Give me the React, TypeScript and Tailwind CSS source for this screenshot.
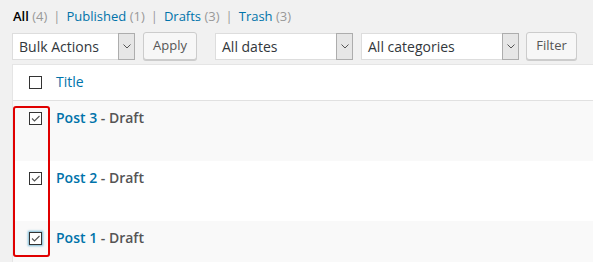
import React from 'react';

const Chevron = () => (
  <svg width="8" height="5" viewBox="0 0 8 5" className="text-[#555]">
    <path d="M0.5 0.5 L4 4 L7.5 0.5" fill="none" stroke="currentColor" strokeWidth="1" />
  </svg>
);

const Select = ({ label, width }: { label: string; width: string }) => (
  <div className={`${width} h-[27px] flex items-stretch bg-white border border-[#ddd]`}>
    <span className="flex-1 flex items-center pl-[6px] text-[14px] text-[#32373c]">{label}</span>
    <span className="w-[17px] flex items-center justify-center bg-[#e6e6e6] border border-[#adadad] -my-px -mr-px">
      <Chevron />
    </span>
  </div>
);

const Button = ({ label, width }: { label: string; width: string }) => (
  <button className={`${width} h-[28px] rounded-[3px] border border-[#ccc] bg-[#f7f7f7] shadow-[0_1px_0_#ccc] text-[13px] text-[#555] flex items-center justify-center`}>
    {label}
  </button>
);

const Checkbox = ({ checked, focused }: { checked?: boolean; focused?: boolean }) => (
  <span
    className={`w-[13px] h-[13px] border flex items-center justify-center bg-white ${
      focused ? 'border-[#333] shadow-[0_0_2px_1px_rgba(30,140,190,0.6)]' : 'border-[#333]'
    }`}
  >
    {checked && (
      <svg width="11" height="11" viewBox="0 0 11 11">
        <path d="M2 5.5 L4.5 8 L9.5 3" fill="none" stroke="#555" strokeWidth="1.1" />
      </svg>
    )}
  </span>
);

const rows = [
  { n: 3, bg: 'bg-[#f9f9f9]' },
  { n: 2, bg: 'bg-white' },
  { n: 1, bg: 'bg-[#f9f9f9]', focused: true },
];

export default function App() {
  return (
    <div
      className="relative w-[593px] h-[262px] overflow-hidden bg-[#f1f1f1]"
      style={{ fontFamily: '"Open Sans", "Liberation Sans", sans-serif' }}
    >
      <div className="pl-[13px] pt-[6px] h-[32px] text-[13px] leading-[20px] text-[#666]">
        <span className="text-black font-semibold">All</span> <span className="text-[#999]">(4)</span>
        <span className="mx-[6px] text-[#999]">|</span>
        <span className="text-[#0073aa]">Published</span> <span className="text-[#999]">(1)</span>
        <span className="mx-[6px] text-[#999]">|</span>
        <span className="text-[#0073aa]">Drafts</span> <span className="text-[#999]">(3)</span>
        <span className="mx-[6px] text-[#999]">|</span>
        <span className="text-[#0073aa]">Trash</span> <span className="text-[#999]">(3)</span>
      </div>

      <div className="flex items-center h-[28px] pl-[12px]">
        <Select label="Bulk Actions" width="w-[123px]" />
        <div className="ml-[8px]">
          <Button label="Apply" width="w-[54px]" />
        </div>
        <div className="ml-[18px]">
          <Select label="All dates" width="w-[138px]" />
        </div>
        <div className="ml-[8px]">
          <Select label="All categories" width="w-[158px]" />
        </div>
        <div className="ml-[7px]">
          <Button label="Filter" width="w-[51px]" />
        </div>
      </div>

      <div className="ml-[12px] mt-[4px] border-l border-t border-[#e5e5e5] bg-white">
        <div className="h-[36px] flex items-center border-b border-[#e1e1e1] bg-white">
          <div className="w-[43px] flex justify-center pl-[2px]">
            <Checkbox />
          </div>
          <span className="text-[14px] text-[#0073aa] -mt-[2px]">Title</span>
        </div>
        {rows.map((r) => (
          <div key={r.n} className={`h-[60px] flex items-start pt-[10px] ${r.bg}`}>
            <div className="w-[43px] flex justify-center pl-[2px] pt-[1px]">
              <Checkbox checked focused={r.focused} />
            </div>
            <span className="text-[14px] leading-[16px] font-semibold text-[#555] -mt-[1px]">
              <span className="text-[#0073aa]">Post {r.n}</span> - Draft
            </span>
          </div>
        ))}
      </div>

      <div className="absolute left-[13px] top-[106px] w-[37px] h-[151px] border-2 border-[#e00000] rounded-[3px]" />
    </div>
  );
}
